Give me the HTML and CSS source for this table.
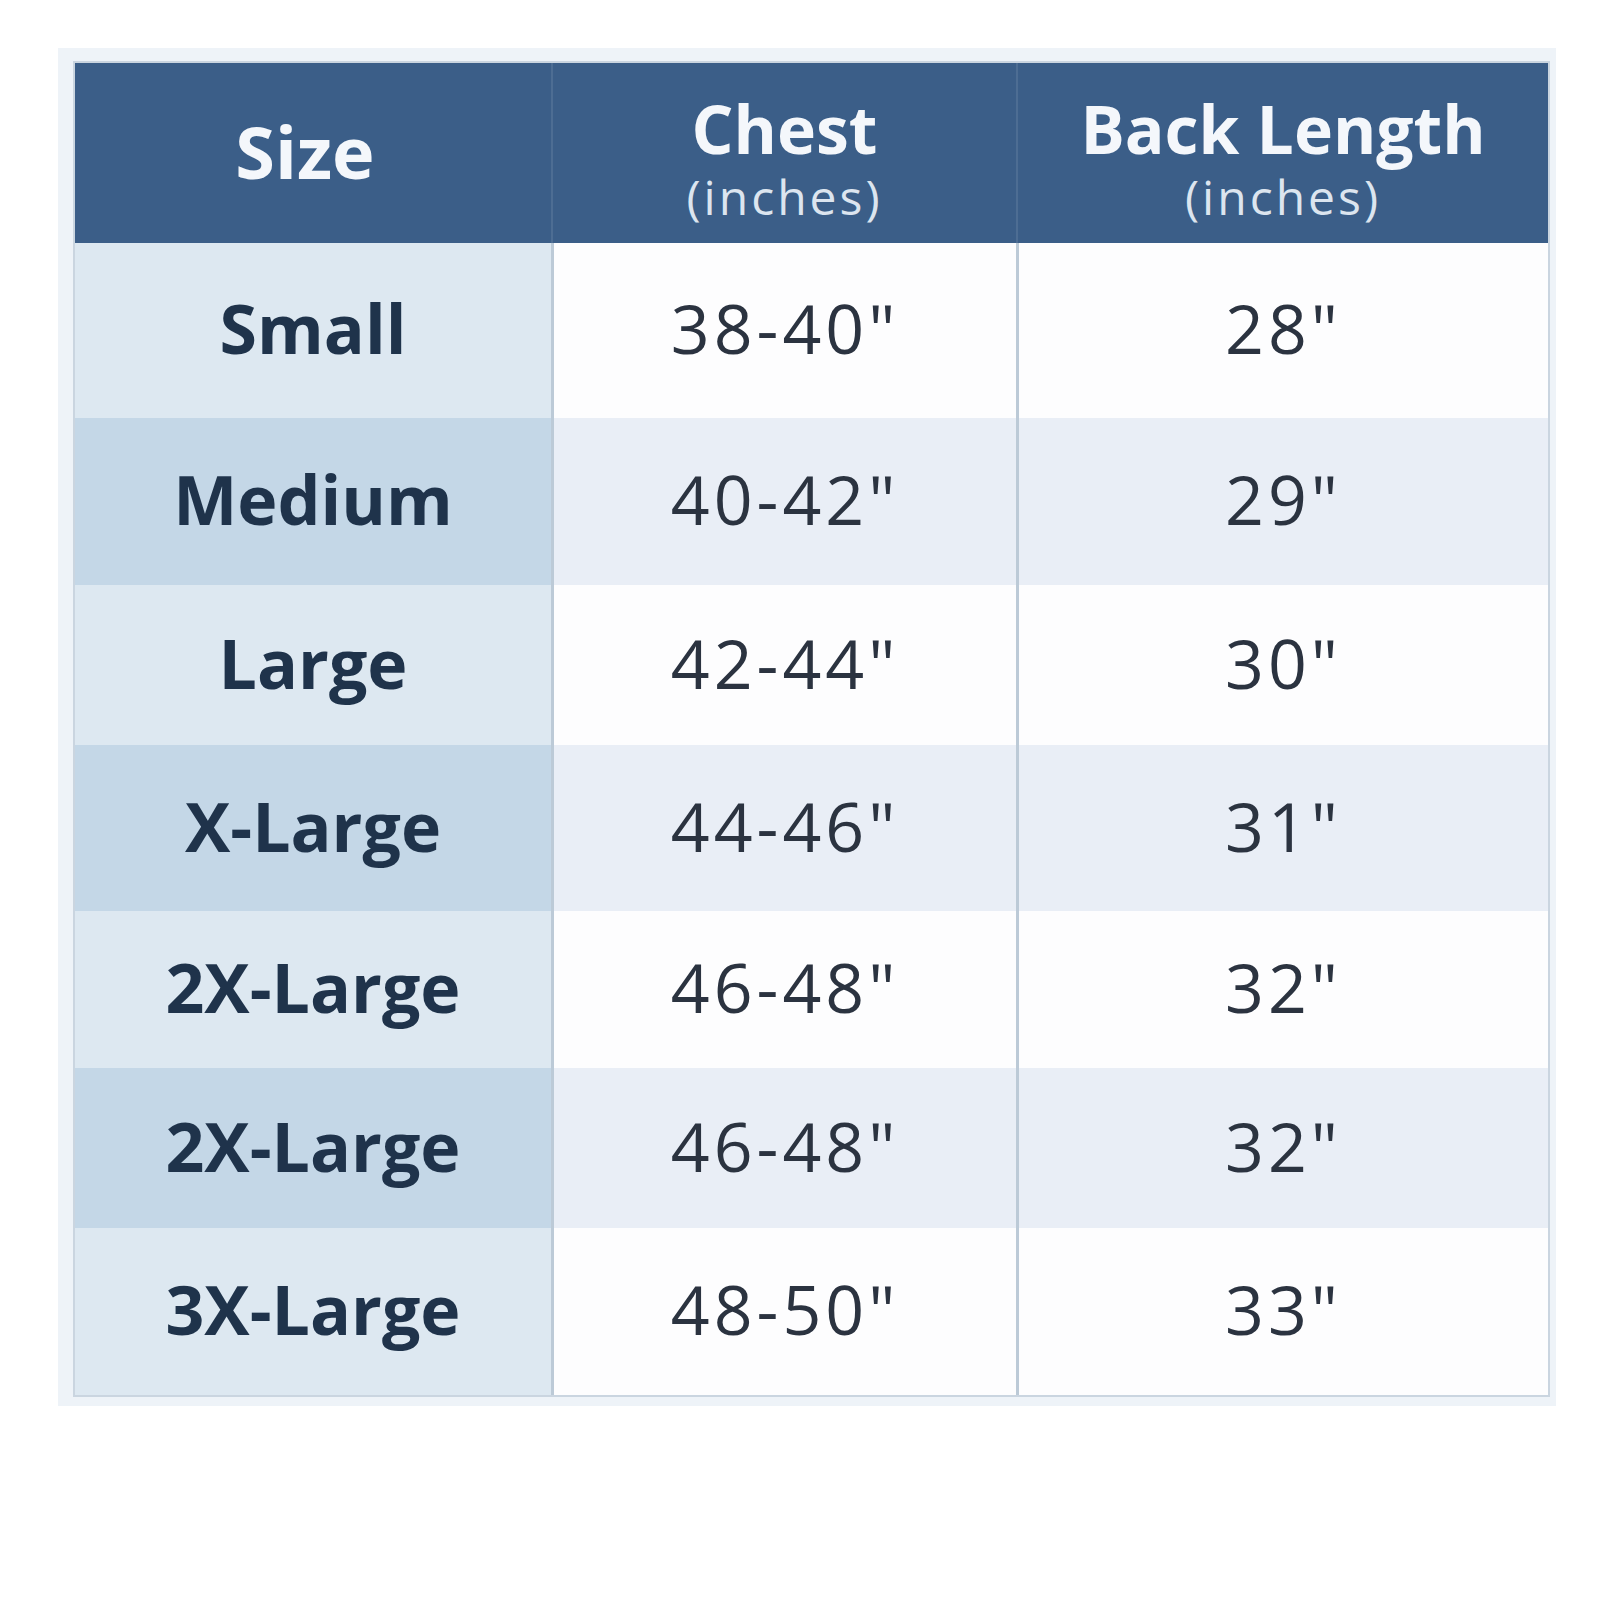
FILE: index.html
```html
<!DOCTYPE html>
<html>
<head>
<meta charset="utf-8">
<link rel="stylesheet" href="styles.css">
</head>
<body>
<div class="frame">
  <div class="chart">
    <div class="hd c1"><span class="ht">Size</span></div>
    <div class="hd c2"><span class="ht">Chest</span><span class="hs">(inches)</span></div>
    <div class="hd c3"><span class="ht">Back Length</span><span class="hs">(inches)</span></div>

    <div class="sz odd">Small</div><div class="val odd c2">38-40"</div><div class="val odd c3">28"</div>
    <div class="sz even">Medium</div><div class="val even c2">40-42"</div><div class="val even c3">29"</div>
    <div class="sz odd">Large</div><div class="val odd c2">42-44"</div><div class="val odd c3">30"</div>
    <div class="sz even">X-Large</div><div class="val even c2">44-46"</div><div class="val even c3">31"</div>
    <div class="sz odd">2X-Large</div><div class="val odd c2">46-48"</div><div class="val odd c3">32"</div>
    <div class="sz even">2X-Large</div><div class="val even c2">46-48"</div><div class="val even c3">32"</div>
    <div class="sz odd">3X-Large</div><div class="val odd c2">48-50"</div><div class="val odd c3">33"</div>
  </div>
</div>
</body>
</html>
```
FILE: styles.css
```css
html, body {
  margin: 0;
  padding: 0;
  background: #ffffff;
}
body {
  font-family: "Open Sans", "Noto Sans", sans-serif;
}
.frame {
  margin: 48px 0 0 58px;
  width: 1498px;
  box-sizing: border-box;
  padding: 15px 8px 11px 17px;
  background: #eef3f8;
}
.chart {
  display: grid;
  grid-template-columns: 476px 465px 532px;
  grid-template-rows: 180px 175px 167px 160px 166px 157px 160px 167px;
  width: 1473px;
  box-shadow: 0 0 0 2px #cad5e0;
}
.hd {
  background: #3b5e88;
  color: #f4f7fb;
  display: flex;
  flex-direction: column;
  align-items: center;
  justify-content: center;
}
.hd.c1 {
  padding-right: 16px;
}
.hd.c2, .hd.c3 {
  border-left: 2px solid #4d6d93;
  padding-top: 12px;
}
.ht {
  font-weight: 700;
  font-size: 66px;
  line-height: 66px;
}
.hd.c1 .ht {
  font-size: 72px;
  line-height: 72px;
  padding-bottom: 4px;
}
.hs {
  margin-top: 10px;
  font-size: 48px;
  line-height: 52px;
  letter-spacing: 3px;
  color: #dce5ef;
}
.sz, .val {
  display: flex;
  align-items: center;
  justify-content: center;
  padding-bottom: 6px;
}
.sz {
  font-weight: 700;
  font-size: 68px;
  color: #1f334b;
}
.sz.odd { background: #dde8f1; }
.sz.even { background: #c4d7e7; }
.val {
  font-size: 68px;
  color: #2b3340;
  letter-spacing: 4px;
}
.val.c2, .val.c3 {
  border-left: 3px solid #bccad7;
}
.val.odd { background: #fdfdfe; }
.val.even { background: #e9eef6; }
```
